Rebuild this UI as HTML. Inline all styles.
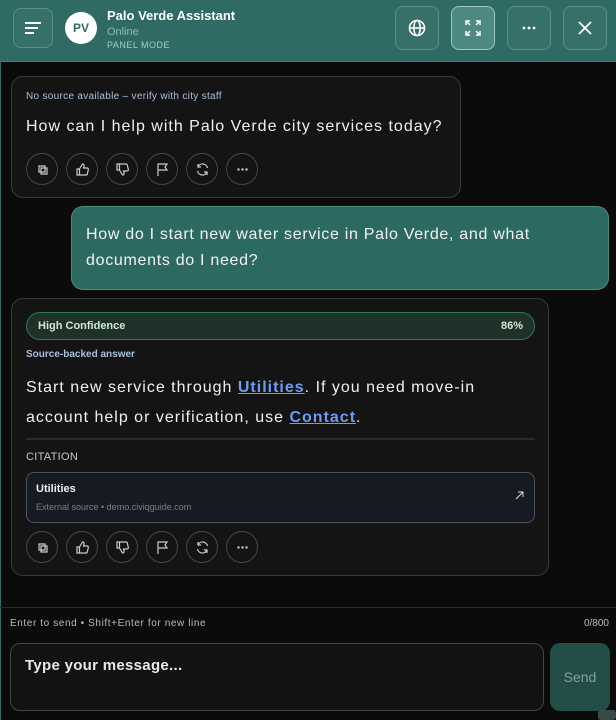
<!DOCTYPE html>
<html><head><style>
*{box-sizing:border-box;margin:0;padding:0}
body{width:616px;height:720px;background:#0b0b0b;font-family:"Liberation Sans",sans-serif;color:#e8e8e8;position:relative;overflow:hidden}
.hdr{position:absolute;left:0;top:0;width:616px;height:62px;background:#2f6b64;border-bottom:1px solid #3f7d75}
.hb{position:absolute;top:6px;width:44px;height:44px;border:1px solid #5a9088;border-radius:8px;background:#367069;display:flex;align-items:center;justify-content:center}
.av{position:absolute;left:65px;top:12px;width:32px;height:32px;border-radius:50%;background:#fff;color:#2f6b64;font-size:12px;font-weight:bold;display:flex;align-items:center;justify-content:center}
.bub{position:absolute;background:#141414;border:1px solid #3a3a3a;border-radius:12px}
.acts{position:absolute;display:flex;gap:8px}
.acts div{width:32px;height:32px;border:1px solid #474747;border-radius:50%;display:flex;align-items:center;justify-content:center}
a{color:#6d9cf5;font-weight:bold;text-decoration:underline}
.ls{letter-spacing:1px}
</style></head><body>
<div style="position:absolute;left:0;top:0;width:1px;height:720px;background:#2f6d66"></div>
<div class="hdr">
 <div class="hb" style="left:13px;top:8px;width:40px;height:40px"><svg width="18" height="14"><path d="M1 2h16M1 7h13M1 12h9" stroke="#fff" stroke-width="2"/></svg></div>
 <div class="av">PV</div>
 <div style="position:absolute;left:107px;top:8px;font-size:13px;font-weight:bold;color:#fff">Palo Verde Assistant</div>
 <div style="position:absolute;left:107px;top:26px;font-size:11px;color:#8fb8b1">Online</div>
 <div style="position:absolute;left:107px;top:40px;font-size:9px;color:#9fd0c4;letter-spacing:.5px">PANEL MODE</div>
 <div class="hb" style="left:395px;width:44px"><svg width="18" height="18" fill="none" stroke="#fff" stroke-width="1.6"><circle cx="9" cy="9" r="7.5"/><ellipse cx="9" cy="9" rx="3.2" ry="7.5"/><path d="M1.5 9h15"/></svg></div>
 <div class="hb" style="left:451px;background:#4f8a82;border-color:#a0c4be"><svg width="18" height="18" fill="none" stroke="#fff" stroke-width="1.5"><path d="M2 6V2h4M2 2l4 4M16 6V2h-4M16 2l-4 4M2 12v4h4M2 16l4-4M16 12v4h-4M16 16l-4-4"/></svg></div>
 <div class="hb" style="left:507px"><svg width="16" height="4"><circle cx="3" cy="2" r="1.4" fill="#fff"/><circle cx="8" cy="2" r="1.4" fill="#fff"/><circle cx="13" cy="2" r="1.4" fill="#fff"/></svg></div>
 <div class="hb" style="left:563px"><svg width="14" height="14"><path d="M1 1l12 12M13 1L1 13" stroke="#fff" stroke-width="1.8"/></svg></div>
</div>

<div class="bub" style="left:11px;top:76px;width:450px;height:122px">
 <div style="position:absolute;left:14px;top:14px;font-size:10px;color:#a9c0e0;letter-spacing:.3px">No source available – verify with city staff</div>
 <div class="ls" style="position:absolute;left:14px;top:41px;font-size:16px;color:#f0f0f0;white-space:nowrap">How can I help with Palo Verde city services today?</div>
</div>
<div class="acts" style="left:26px;top:153px" id="a1"></div>

<div style="position:absolute;left:71px;top:206px;width:538px;height:84px;background:#2c6a61;border:1px solid #4a8a80;border-radius:12px;padding:15px 10px 0 14px;font-size:16px;line-height:26px;color:#f2f2f2;letter-spacing:.7px">How do I start new water service in Palo Verde, and what documents do I need?</div>

<div class="bub" style="left:11px;top:298px;width:538px;height:278px">
 <div style="position:absolute;left:14px;top:13px;width:509px;height:28px;border:1px solid #2e7a52;background:#1e3229;border-radius:14px;font-size:11px;color:#cfe9d6;font-weight:bold;padding:7px 11px">High Confidence<span style="float:right">86%</span></div>
 <div style="position:absolute;left:14px;top:50px;font-size:10px;color:#a9c0e0;font-weight:bold">Source-backed answer</div>
 <div class="ls" style="position:absolute;left:14px;top:74px;width:470px;font-size:16px;line-height:30px;color:#f0f0f0">Start new service through <a>Utilities</a>. If you need move-in account help or verification, use <a>Contact</a>.</div>
 <div style="position:absolute;left:14px;top:139px;width:509px;border-top:2px solid #2a2a2a"></div>
 <div style="position:absolute;left:14px;top:152px;font-size:11px;color:#c8c8c8;letter-spacing:.3px">CITATION</div>
 <div style="position:absolute;left:14px;top:173px;width:509px;height:51px;background:#161a22;border:1px solid #4b5262;border-radius:8px">
  <div style="position:absolute;left:9px;top:10px;font-size:11px;font-weight:bold;color:#f0f0f0">Utilities</div>
  <div style="position:absolute;left:9px;top:29px;font-size:9px;color:#7c7f86">External source • demo.civiqguide.com</div>
  <svg style="position:absolute;right:10px;top:18px" width="9" height="9"><path d="M1 8L8 1M3 1h5v5" stroke="#ddd" stroke-width="1" fill="none"/></svg>
 </div>
</div>
<div class="acts" style="left:26px;top:531px" id="a2"></div>

<div style="position:absolute;left:0;top:607px;width:616px;border-top:1px solid #2a2a2a"></div>
<div style="position:absolute;left:10px;top:618px;font-size:10px;color:#bbb;letter-spacing:.6px">Enter to send • Shift+Enter for new line</div>
<div style="position:absolute;right:7px;top:618px;font-size:10px;color:#bbb">0/800</div>
<div style="position:absolute;left:10px;top:643px;width:534px;height:68px;background:#121212;border:1px solid #444;border-radius:10px;padding:13px 14px;font-size:15px;color:#e8e8e8;font-weight:bold;letter-spacing:.3px">Type your message...</div>
<div style="position:absolute;left:550px;top:643px;width:60px;height:68px;background:#234d47;border-radius:10px;color:#86a09b;font-size:14px;display:flex;align-items:center;justify-content:center">Send</div>
<div style="position:absolute;left:598px;top:710px;width:18px;height:10px;background:#3a4a48;border-radius:3px"></div>

<script>
var ic=[
'<path d="M4 4h6v6H4zM6 6h6v6H6z" fill="none" stroke="#ccc" stroke-width="1.2"/>',
'<path d="M2 7h2.5v6H2zM4.5 7l3-5c1.5 0 1.8 1 1.5 2.5L8.5 6H12c1 0 1.5.8 1.3 1.6l-1 4.4c-.2.6-.7 1-1.3 1H4.5" fill="none" stroke="#ccc" stroke-width="1.2"/>',
'<path d="M2 2h2.5v6H2zM4.5 8l3 5c1.5 0 1.8-1 1.5-2.5L8.5 9H12c1 0 1.5-.8 1.3-1.6l-1-4.4C12.1 2.4 11.6 2 11 2H4.5" fill="none" stroke="#ccc" stroke-width="1.2"/>',
'<path d="M3 14V2h9l-2 3 2 3H3" fill="none" stroke="#ccc" stroke-width="1.2"/>',
'<path d="M12.5 6A5 5 0 0 0 3 5M2.5 9A5 5 0 0 0 12 10M3 2v3h3M12 13v-3H9" fill="none" stroke="#ccc" stroke-width="1.2"/>',
'<circle cx="3.5" cy="7.5" r="1.2" fill="#ccc"/><circle cx="7.5" cy="7.5" r="1.2" fill="#ccc"/><circle cx="11.5" cy="7.5" r="1.2" fill="#ccc"/>'];
['a1','a2'].forEach(function(id){document.getElementById(id).innerHTML=ic.map(function(p){return '<div><svg width="15" height="15">'+p+'</svg></div>'}).join('')});
</script>
</body></html>
